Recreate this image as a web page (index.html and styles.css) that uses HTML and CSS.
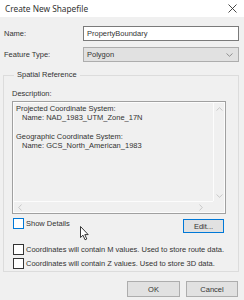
FILE: index.html
```html
<!DOCTYPE html>
<html>
<head>
	<title>Create New Shapefile</title>
	<link rel="stylesheet" href="styles.css">
</head>
<body>
	<div class="dialog">
		<div class="titlebar">
			<span class="title">Create New Shapefile</span>
			<svg class="close" width="9" height="9" viewBox="0 0 9 9"><path d="M0.5 0.5 L8.5 8.5 M8.5 0.5 L0.5 8.5" stroke="#333" stroke-width="0.9" fill="none"/></svg>
		</div>

		<div class="content">
			<div class="row name-row">
				<label class="lbl">Name:</label>
				<div class="textbox">PropertyBoundary</div>
			</div>
			<div class="row type-row">
				<label class="lbl">Feature Type:</label>
				<div class="combo">
					<span>Polygon</span>
					<svg width="7" height="4" viewBox="0 0 7 4"><path d="M0.5 0.5 L3.5 3.3 L6.5 0.5" stroke="#888" stroke-width="0.9" fill="none"/></svg>
				</div>
			</div>

			<fieldset class="group">
				<legend>Spatial Reference</legend>
				<div class="desc-label">Description:</div>
				<div class="desc">
					<div class="desc-text">
						<div>Projected Coordinate System:</div>
						<div class="indent">Name: NAD_1983_UTM_Zone_17N</div>
						<div>&nbsp;</div>
						<div>Geographic Coordinate System:</div>
						<div class="indent">Name: GCS_North_American_1983</div>
					</div>
					<div class="vscroll">
						<svg width="7" height="4" viewBox="0 0 7 4"><path d="M0.5 3.5 L3.5 0.7 L6.5 3.5" stroke="#c4c4c4" stroke-width="0.9" fill="none"/></svg>
						<svg width="7" height="4" viewBox="0 0 7 4"><path d="M0.5 0.5 L3.5 3.3 L6.5 0.5" stroke="#c4c4c4" stroke-width="0.9" fill="none"/></svg>
					</div>
					<div class="hscroll">
						<svg width="4" height="7" viewBox="0 0 4 7"><path d="M3.5 0.5 L0.7 3.5 L3.5 6.5" stroke="#c4c4c4" stroke-width="0.9" fill="none"/></svg>
						<svg width="4" height="7" viewBox="0 0 4 7"><path d="M0.5 0.5 L3.3 3.5 L0.5 6.5" stroke="#c4c4c4" stroke-width="0.9" fill="none"/></svg>
					</div>
					<div class="corner"></div>
				</div>

				<div class="details-row">
					<div class="check">
						<span class="box focus"></span>
						<span>Show Details</span>
					</div>
					<div class="btn edit">Edit...</div>
				</div>

				<div class="check m-row">
					<span class="box"></span>
					<span>Coordinates will contain M values. Used to store route data.</span>
				</div>
				<div class="check z-row">
					<span class="box"></span>
					<span>Coordinates will contain Z values. Used to store 3D data.</span>
				</div>
			</fieldset>

			<div class="buttons">
				<div class="btn ok">OK</div>
				<div class="btn cancel">Cancel</div>
			</div>
		</div>

		<!-- mouse pointer over the dialog -->
		<svg class="cursor" width="10" height="15" viewBox="0 0 10 15">
			<path d="M0.5 0.5 L0.5 11.5 L3 9.2 L5 13.8 L6.8 13 L4.8 8.6 L8.2 8.6 Z" fill="#fff" stroke="#222" stroke-width="0.9" stroke-linejoin="round"/>
		</svg>
	</div>
</body>
</html>
```

FILE: styles.css
```css
body {
	margin: 0;
	background-color: #f0f0f0;
}

.dialog {
	position: relative;
	width: 244px;
	height: 300px;
	background-color: #f0f0f0;
	font-family: "Liberation Sans", Arial, sans-serif;
	font-size: 7.5px;
	color: #333;
	overflow: hidden;
}

.titlebar {
	height: 17px;
	background-color: #fff;
	display: flex;
	align-items: center;
	justify-content: space-between;
	padding: 0 7px 0 5px;
}

.title {
	font-family: "Noto Sans", "Open Sans", sans-serif;
	font-size: 8.3px;
	color: #333;
}

.content {
	padding: 0 5px 0 3px;
}

.row {
	display: flex;
	align-items: center;
	height: 15px;
}

.name-row {
	margin-top: 9px;
}

.type-row {
	margin-top: 6px;
}

.lbl {
	width: 79px;
	padding-left: 1px;
}

.textbox {
	flex: 1;
	height: 15px;
	box-sizing: border-box;
	border: 1px solid #7a7a7a;
	background-color: #fff;
	padding: 0 3px;
	display: flex;
	align-items: center;
}

.combo {
	flex: 1;
	height: 15px;
	box-sizing: border-box;
	border: 1px solid #adadad;
	background-color: #e1e1e1;
	padding: 0 5px 0 3px;
	display: flex;
	align-items: center;
	justify-content: space-between;
}

.group {
	margin: 8px 0 0 0;
	padding: 0 12px 0 8px;
	height: 202px;
	box-sizing: border-box;
	border: 1px solid #dcdcdc;
	min-width: 0;
}

.group legend {
	padding: 0 3px;
	margin-left: 2px;
	line-height: 10px;
}

.desc-label {
	margin-top: 9px;
	height: 9px;
}

.desc {
	margin-top: 3px;
	height: 113px;
	box-sizing: border-box;
	border: 1px solid #a0a0a0;
	box-shadow: inset 0 0 0 1px #fcfcfc;
	display: grid;
	grid-template-columns: 1fr 12px;
	grid-template-rows: 1fr 12px;
}

.desc-text {
	padding: 2px 3px;
	line-height: 9.3px;
}

.indent {
	padding-left: 6px;
}

.vscroll {
	display: flex;
	flex-direction: column;
	justify-content: space-between;
	align-items: center;
	padding: 5px 0 3px;
	border-left: 1px solid #fcfcfc;
}

.hscroll {
	display: flex;
	justify-content: space-between;
	align-items: center;
	padding: 0 10px 0 5px;
	border-top: 1px solid #fcfcfc;
}

.details-row {
	margin-top: 4px;
	display: flex;
	justify-content: space-between;
	align-items: flex-start;
	padding-right: 2px;
}

.check {
	display: flex;
	align-items: center;
	gap: 2px;
	padding-left: 1px;
}

.box {
	width: 11px;
	height: 11px;
	box-sizing: border-box;
	border: 1px solid #333;
	background-color: #fff;
}

.box.focus {
	border-color: #0078d7;
}

.m-row {
	margin-top: 11px;
}

.z-row {
	margin-top: 3px;
}

.btn {
	height: 16px;
	box-sizing: border-box;
	border: 1px solid #adadad;
	background-color: #e1e1e1;
	display: flex;
	align-items: center;
	justify-content: center;
}

.edit {
	width: 41px;
	height: 14px;
	margin-top: 1px;
	border-color: #0078d7;
}

.buttons {
	display: flex;
	justify-content: flex-end;
	gap: 6px;
	margin-top: 9px;
	padding-right: 1px;
}

.ok {
	width: 53px;
}

.cancel {
	width: 52px;
}

.cursor {
	position: absolute;
	left: 80px;
	top: 226px;
}
```
